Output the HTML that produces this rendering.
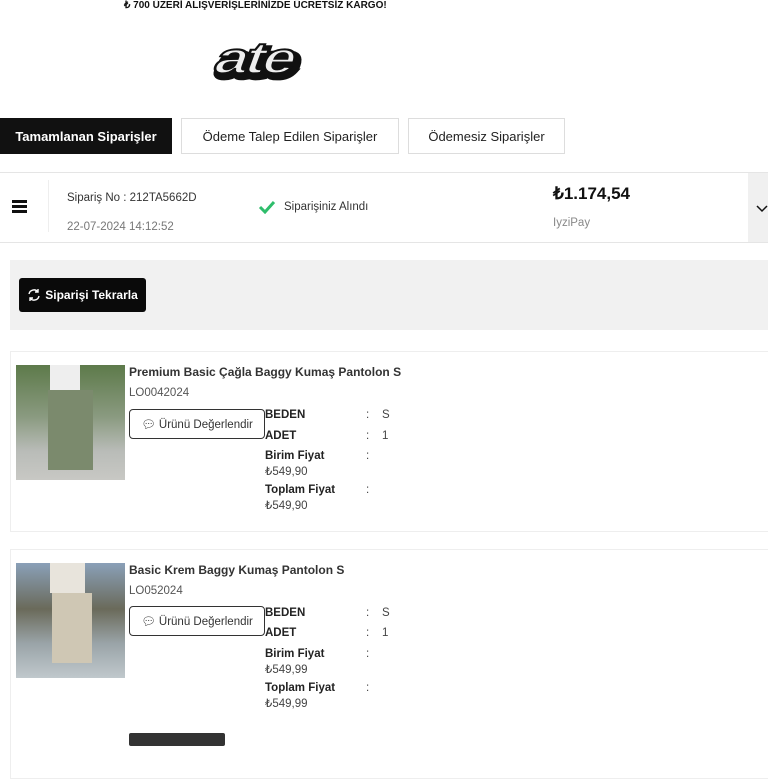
<!DOCTYPE html>
<html><head><meta charset="utf-8"><style>
*{box-sizing:border-box;margin:0;padding:0}
body{width:768px;height:768px;overflow:hidden;background:#fff;font-family:"Liberation Sans",sans-serif;color:#222;position:relative}
.a{position:absolute}
.tab{position:absolute;top:118px;height:36px;border:1px solid #ddd;font-size:13px;display:flex;align-items:center;justify-content:center;color:#222}
.lbl{font-size:11.5px;font-weight:bold;color:#222}
.val{font-size:11.5px;color:#444}
.btn2{position:absolute;left:129px;width:136px;height:30px;border:1px solid #333;border-radius:4px;font-size:11.5px;color:#333;display:flex;align-items:center;justify-content:center;gap:4px}
.card{position:absolute;left:10px;width:770px;border:1px solid #eee}
</style></head><body>
<div class="a" style="left:124px;top:0;font-size:10px;font-weight:bold;color:#111">₺ 700 ÜZERİ ALIŞVERİŞLERİNİZDE ÜCRETSİZ KARGO!</div>
<svg class="a" style="left:204px;top:30px" width="100" height="54" viewBox="0 0 100 54">
<g transform="translate(0,0) scale(1.35,1) skewX(-15)" font-family="Liberation Sans" font-weight="bold">
<text x="20" y="47" font-size="44" fill="#111" stroke="#111" stroke-width="6" letter-spacing="-2">ate</text>
<text x="17" y="43" font-size="44" fill="#eee" stroke="#111" stroke-width="2" letter-spacing="-2">ate</text>
</g></svg>
<div class="tab" style="left:0;width:172px;background:#111;color:#fff;border-color:#111;font-weight:bold">Tamamlanan Siparişler</div>
<div class="tab" style="left:181px;width:218px">Ödeme Talep Edilen Siparişler</div>
<div class="tab" style="left:408px;width:157px">Ödemesiz Siparişler</div>
<div class="a" style="left:0;top:172px;width:768px;height:71px;border-top:1px solid #e5e5e5;border-bottom:1px solid #e5e5e5"></div>
<div class="a" style="left:12px;top:200px;width:15px;height:3px;background:#111;box-shadow:0 5px 0 #111,0 10px 0 #111"></div>
<div class="a" style="left:48px;top:180px;width:1px;height:52px;background:#eee"></div>
<div class="a" style="left:67px;top:192px;font-size:11.5px;color:#333">Sipariş No : 212TA5662D</div>
<div class="a" style="left:67px;top:221px;font-size:11.5px;color:#777">22-07-2024 14:12:52</div>
<svg class="a" style="left:258px;top:200px" width="18" height="14"><path d="M2 7l5 5L16 2" stroke="#2ebd6b" stroke-width="3" fill="none"/></svg>
<div class="a" style="left:284px;top:201px;font-size:11.5px;color:#333">Siparişiniz Alındı</div>
<div class="a" style="left:553px;top:184px;font-size:17px;font-weight:bold;color:#111">₺1.174,54</div>
<div class="a" style="left:553px;top:217px;font-size:11.5px;color:#888">IyziPay</div>
<div class="a" style="left:748px;top:173px;width:20px;height:69px;background:#f0f0f0"></div>
<svg class="a" style="left:756px;top:204px" width="12" height="10"><path d="M1 2l5 5 5-5" stroke="#111" stroke-width="1.5" fill="none"/></svg>
<div class="a" style="left:10px;top:260px;width:758px;height:70px;background:#f1f1f1"></div>
<div class="a" style="left:19px;top:278px;width:127px;height:34px;background:#0a0a0a;border-radius:3px;color:#fff;font-size:12px;font-weight:bold;display:flex;align-items:center;justify-content:center;gap:4px">
<svg width="14" height="14" viewBox="0 0 14 14"><path d="M2 6a5 5 0 0 1 9-2M12 8a5 5 0 0 1-9 2" stroke="#fff" stroke-width="1.4" fill="none"/><path d="M11 1v3H8M3 13v-3h3" stroke="#fff" stroke-width="1.4" fill="none"/></svg>Siparişi Tekrarla</div>

<div class="card" style="top:351px;height:181px"></div>
<div class="a" style="left:16px;top:365px;width:109px;height:115px;background:linear-gradient(180deg,#5d7a4a 0%,#8a9a80 45%,#b9bcb8 75%,#c8c8c4 100%)"></div>
<div class="a" style="left:50px;top:365px;width:30px;height:25px;background:#eee"></div>
<div class="a" style="left:48px;top:390px;width:45px;height:80px;background:#7b8a6d"></div>
<div class="a" style="left:129px;top:365px;font-size:12px;font-weight:bold;color:#333">Premium Basic Çağla Baggy Kumaş Pantolon S</div>
<div class="a" style="left:129px;top:387px;font-size:11.5px;color:#555">LO0042024</div>
<div class="btn2" style="top:409px">💬︎ Ürünü Değerlendir</div>
<div class="a lbl" style="left:265px;top:409px">BEDEN</div><div class="a val" style="left:366px;top:409px">:&nbsp;&nbsp;&nbsp;&nbsp;S</div>
<div class="a lbl" style="left:265px;top:430px">ADET</div><div class="a val" style="left:366px;top:430px">:&nbsp;&nbsp;&nbsp;&nbsp;1</div>
<div class="a lbl" style="left:265px;top:450px">Birim Fiyat</div><div class="a val" style="left:366px;top:450px">:</div>
<div class="a val" style="left:265px;top:464px">₺549,90</div>
<div class="a lbl" style="left:265px;top:484px">Toplam Fiyat</div><div class="a val" style="left:366px;top:484px">:</div>
<div class="a val" style="left:265px;top:498px">₺549,90</div>

<div class="card" style="top:549px;height:230px"></div>
<div class="a" style="left:16px;top:563px;width:109px;height:115px;background:linear-gradient(180deg,#8aa0b8 0%,#6a6a5a 40%,#9aa4a8 70%,#c0c8cc 100%)"></div>
<div class="a" style="left:50px;top:563px;width:35px;height:30px;background:#e8e4dc"></div>
<div class="a" style="left:52px;top:593px;width:40px;height:70px;background:#cfc7b4"></div>
<div class="a" style="left:129px;top:563px;font-size:12px;font-weight:bold;color:#333">Basic Krem Baggy Kumaş Pantolon S</div>
<div class="a" style="left:129px;top:585px;font-size:11.5px;color:#555">LO052024</div>
<div class="btn2" style="top:606px">💬︎ Ürünü Değerlendir</div>
<div class="a lbl" style="left:265px;top:607px">BEDEN</div><div class="a val" style="left:366px;top:607px">:&nbsp;&nbsp;&nbsp;&nbsp;S</div>
<div class="a lbl" style="left:265px;top:627px">ADET</div><div class="a val" style="left:366px;top:627px">:&nbsp;&nbsp;&nbsp;&nbsp;1</div>
<div class="a lbl" style="left:265px;top:648px">Birim Fiyat</div><div class="a val" style="left:366px;top:648px">:</div>
<div class="a val" style="left:265px;top:662px">₺549,99</div>
<div class="a lbl" style="left:265px;top:682px">Toplam Fiyat</div><div class="a val" style="left:366px;top:682px">:</div>
<div class="a val" style="left:265px;top:696px">₺549,99</div>
<div class="a" style="left:129px;top:733px;width:96px;height:13px;background:#333;border-radius:2px"></div>
</body></html>
